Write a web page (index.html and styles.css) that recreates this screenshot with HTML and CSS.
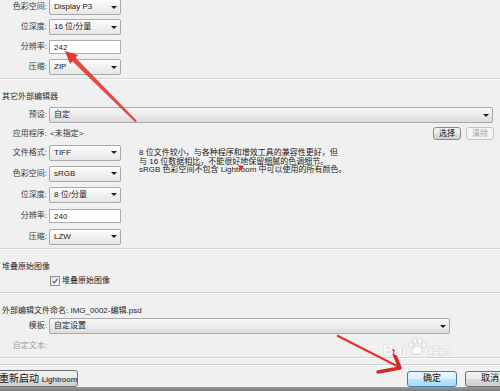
FILE: index.html
```html
<!DOCTYPE html>
<html lang="zh-CN">
<head>
    <meta charset="utf-8">
    <title>外部编辑</title>
    <link rel="stylesheet" href="styles.css">
</head>
<body>
<main class="prefs">
    <div class="rows top">
        <div class="row"><label>色彩空间:</label><div class="combo"><span>Display P3</span><i></i></div></div>
        <div class="row"><label>位深度:</label><div class="combo"><span>16 位/分量</span><i></i></div></div>
        <div class="row"><label>分辨率:</label><div class="field">242</div></div>
        <div class="row"><label>压缩:</label><div class="combo"><span>ZIP</span><i></i></div></div>
    </div>
    <hr>

    <h2>其它外部编辑器</h2>
    <div class="row"><label>预设:</label><div class="combo wide"><span>自定</span><i></i></div></div>
    <div class="row app">
        <label>应用程序:</label><span class="value">&lt;未指定&gt;</span>
        <div class="small-btns">
            <button class="btn small">选择</button>
            <button class="btn small" disabled>清除</button>
        </div>
    </div>
    <div class="split">
        <div class="rows wide-rows">
            <div class="row"><label>文件格式:</label><div class="combo"><span>TIFF</span><i></i></div></div>
            <div class="row"><label>色彩空间:</label><div class="combo"><span>sRGB</span><i></i></div></div>
            <div class="row"><label>位深度:</label><div class="combo"><span>8 位/分量</span><i></i></div></div>
            <div class="row"><label>分辨率:</label><div class="field">240</div></div>
            <div class="row"><label>压缩:</label><div class="combo"><span>LZW</span><i></i></div></div>
        </div>
        <p class="note">
            8 位文件较小，与各种程序和增效工具的兼容性更好，但<br>
            与 16 位数据相比，不能很好地保留细腻的色调细节。<br>
            sRGB 色彩空间不包含 Lightroom 中可以使用的所有颜色。
        </p>
    </div>
    <hr>

    <h2>堆叠原始图像</h2>
    <div class="check-row">
        <span class="check"><svg viewBox="0 0 10 10"><path d="M2 5.2 L4.2 7.4 L8 2.4"/></svg></span>
        <span>堆叠原始图像</span>
    </div>
    <hr class="gap">

    <h2 class="naming">外部编辑文件命名: IMG_0002-编辑.psd</h2>
    <div class="row tight"><label>模板:</label><div class="combo template"><span>自定设置</span><i></i></div></div>
    <div class="row tight custom"><label>自定文本:</label></div>
    <hr class="last">
    <hr class="foot">

    <footer class="actions">
        <button class="btn relaunch">重新启动 <small>Lightroom</small></button>
        <div class="dialog-btns">
            <button class="btn default">确定</button>
            <button class="btn">取消</button>
        </div>
    </footer>
</main>
<div class="taskbar"></div>

<!-- 标注箭头 -->
<svg class="marks" width="500" height="391" viewBox="0 0 500 391">
    <polygon points="137,121 135,122 70,59 74,56" fill="#e0392e" opacity="0.9"/>
    <polygon points="65,51 78,55 70,64" fill="#e0392e"/>
    <polygon points="238,165 244,166 241,171" fill="#d8322a"/>
    <path d="M338 336 L399 367" stroke="#e0392e" stroke-width="2.5" stroke-linecap="round" fill="none"/>
    <path d="M393 351 L400 368 L378 372" stroke="#d32a22" stroke-width="3.5" stroke-linecap="round" stroke-linejoin="round" fill="none"/>
</svg>
<div class="watermark">
    <span class="bai">Bai</span>
    <svg class="paw" width="20" height="20" viewBox="0 0 20 20">
        <ellipse cx="4" cy="8" rx="2.2" ry="3"/>
        <ellipse cx="8" cy="4" rx="2.2" ry="3"/>
        <ellipse cx="13" cy="4" rx="2.2" ry="3"/>
        <ellipse cx="17" cy="8" rx="2.2" ry="3"/>
        <path d="M10 9 C6 9 4 14 5 16 C6 18 9 17 10 17 C11 17 14 18 15 16 C16 14 14 9 10 9 Z"/>
    </svg>
    <span class="jy">经验</span>
</div>
</body>
</html>
```

FILE: styles.css
```css
* {
    margin: 0;
    padding: 0;
    box-sizing: border-box;
}

html, body {
    background: #f0f0f0;
}

body {
    position: relative;
    width: 500px;
    height: 391px;
    overflow: hidden;
    color: #333;
    font: normal 8px/1 "Liberation Sans", "Noto Sans CJK SC", sans-serif;
}

.prefs {
    display: flex;
    flex-direction: column;
    padding: 0 7px 0 2px;
}

.rows.top {
    margin-top: -3px;
}

.row {
    display: flex;
    align-items: center;
    height: 20px;
}

.row label {
    flex: none;
    width: 45px;
    text-align: right;
    color: #3a3a3a;
}

.row.tight {
    height: 16px;
}

.wide-rows .row {
    height: 21px;
}

.combo {
    display: flex;
    align-items: center;
    width: 72px;
    height: 16px;
    margin-left: 2px;
    padding-left: 4px;
    border: 1px solid #a9a9a9;
    border-radius: 2px;
    background: linear-gradient(#fdfdfd, #f1f1f1 50%, #e6e6e6);
    color: #222;
}

.combo i {
    margin-left: auto;
    margin-right: 3px;
    border-left: 3px solid transparent;
    border-right: 3px solid transparent;
    border-top: 3px solid #1e1e1e;
}

.combo.wide {
    flex: 1;
    background: linear-gradient(#f7f7f7, #ececec 50%, #dcdcdc);
}

.combo.template {
    width: 401px;
    background: linear-gradient(#f7f7f7, #ececec 50%, #dcdcdc);
}

.field {
    width: 72px;
    height: 14px;
    margin-left: 2px;
    padding: 3px 0 0 4px;
    border: 1px solid #abadb3;
    background: #fff;
    color: #222;
}

hr {
    border: 0;
    border-top: 1px solid #d6d6d6;
    border-bottom: 1px solid #fbfbfb;
    margin: 1px -7px 0 -2px;
}

hr.gap {
    margin-top: 5px;
}

hr.last {
    margin-top: 3px;
}

hr.foot {
    margin-top: 5px;
    border-top-color: #d0d0d0;
}

h2 {
    display: flex;
    align-items: center;
    gap: 6px;
    height: 16px;
    margin-top: 9px;
    font-size: 8px;
    font-weight: normal;
    color: #2a2a2a;
}

h2::after {
    content: "";
    flex: 1;
    border-top: 1px solid #ebebeb;
}

h2.naming {
    height: 14px;
    margin-top: 10px;
}

.row.app {
    height: 17px;
}

.value {
    margin-left: 3px;
    color: #333;
}

.small-btns {
    display: flex;
    gap: 5px;
    margin-left: auto;
    margin-right: -1px;
}

.btn {
    height: 17px;
    padding: 0 6px;
    border: 1px solid #707070;
    border-radius: 3px;
    background: linear-gradient(#f2f2f2, #ebebeb 50%, #dddddd 51%, #cfcfcf);
    color: #111;
    white-space: nowrap;
    font: normal 9px/1 "Liberation Sans", "Noto Sans CJK SC", sans-serif;
}

.btn.small {
    width: 28px;
    height: 13px;
    padding: 0;
    font-size: 8px;
    border-color: #8a8a8a;
}

.btn[disabled] {
    border-color: #c4c4c4;
    background: #f4f4f4;
    color: #a6a6a6;
}

.split {
    display: flex;
    align-items: flex-start;
}

.wide-rows {
    flex: none;
    width: 119px;
}

.note {
    margin: 7px 0 0 18px;
    line-height: 8.6px;
    color: #222;
}

.check-row {
    display: flex;
    align-items: center;
    gap: 2px;
    height: 12px;
    padding-left: 48px;
    color: #222;
}

.check {
    width: 10px;
    height: 10px;
    border: 1px solid #8e8f8f;
    background: linear-gradient(135deg, #dedede, #fbfbfb);
}

.check svg {
    display: block;
    width: 8px;
    height: 8px;
}

.check path {
    fill: none;
    stroke: #4a5e8e;
    stroke-width: 1.4;
}

.custom {
    margin-top: 4px;
}

.custom label {
    color: #a3a3a3;
}

.actions {
    display: flex;
    align-items: center;
    height: 17px;
    margin: 4px -7px 0 -2px;
}

.btn.relaunch {
    width: 81px;
    margin-left: -3px;
    padding: 0 0 0 1px;
    text-align: left;
    font-size: 10px;
}

.btn.relaunch small {
    font-size: 8px;
}

.dialog-btns {
    display: flex;
    gap: 8px;
    margin-left: auto;
    margin-right: -15px;
}

.dialog-btns .btn {
    width: 50px;
    height: 16px;
}

.btn.default {
    border-color: #3c7fb1;
    background: linear-gradient(#eaf6fd, #d9f0fc 50%, #bee6fd 51%, #a7d9f5);
}

.taskbar {
    position: absolute;
    left: 0;
    right: 0;
    bottom: 0;
    height: 4px;
    background: linear-gradient(#9a9a9a, #7a7a7a);
}

.marks {
    position: absolute;
    left: 0;
    top: 0;
    pointer-events: none;
}

.watermark {
    position: absolute;
    left: 383px;
    top: 337px;
    display: flex;
    align-items: flex-end;
    gap: 1px;
    color: #fff;
    opacity: 0.85;
    pointer-events: none;
}

.watermark .bai {
    font: bold 15px/1 "Liberation Sans", sans-serif;
    text-shadow: 0 0 1px #999;
}

.watermark .paw {
    fill: #fff;
    stroke: #aaa;
    stroke-width: 0.5;
}

.watermark .jy {
    font: bold 11px/1 "Noto Sans CJK SC", sans-serif;
    text-shadow: 0 0 1px #999;
}
```
